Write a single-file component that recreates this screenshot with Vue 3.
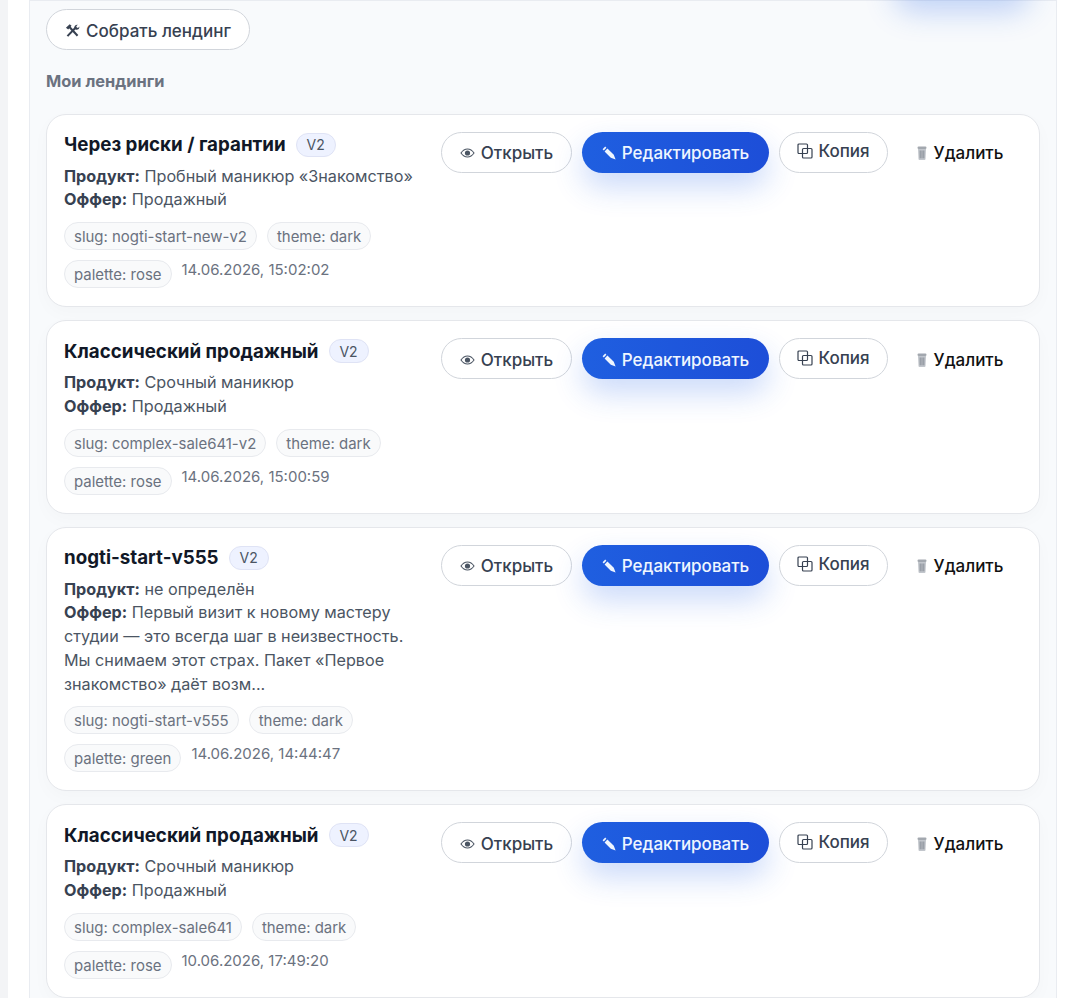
<script setup>
const cards = [
  { title: 'Через риски / гарантии', product: 'Пробный маникюр «Знакомство»', offer: 'Продажный', slug: 'nogti-start-new-v2', palette: 'rose', date: '14.06.2026, 15:02:02' },
  { title: 'Классический продажный', product: 'Срочный маникюр', offer: 'Продажный', slug: 'complex-sale641-v2', palette: 'rose', date: '14.06.2026, 15:00:59' },
  { title: 'nogti-start-v555', product: 'не определён', offer: 'Первый визит к новому мастеру студии — это всегда шаг в неизвестность. Мы снимаем этот страх. Пакет «Первое знакомство» даёт возм...', slug: 'nogti-start-v555', palette: 'green', date: '14.06.2026, 14:44:47' },
  { title: 'Классический продажный', product: 'Срочный маникюр', offer: 'Продажный', slug: 'complex-sale641', palette: 'rose', date: '10.06.2026, 17:49:20' }
]
</script>

<template>
  <div class="page">
    <main class="panel">
      <div class="glow"></div>
      <button class="btn build">
        <svg class="ic" width="15" height="15" viewBox="0 0 16 16" fill="none" stroke="#374151">
          <path d="M2.6 14 11.5 4.8" stroke-width="2.2" />
          <path d="M4.5 4 13.4 13.6" stroke-width="2.2" />
          <path d="M1 5 5 1.4l2 1.6-3.6 4Z" fill="#374151" stroke="none" />
          <path d="M10 5.4c-.4-2.2 1.4-4 3.6-3.6L12 3.5l.6 1.3 1.3.5 1.4-1.6c.4 2.4-1.6 4-3.8 3.5Z" fill="#374151" stroke="none" />
        </svg>
        Собрать лендинг
      </button>
      <h2 class="heading">Мои лендинги</h2>
      <section class="list">
        <article v-for="card in cards" :key="card.slug" class="card">
          <div class="info">
            <div class="title-row">
              <span class="title">{{ card.title }}</span>
              <span class="badge">V2</span>
            </div>
            <div class="meta">
              <div><b>Продукт:</b> {{ card.product }}</div>
              <div><b>Оффер:</b> {{ card.offer }}</div>
            </div>
            <div class="tags">
              <span class="tag">slug: {{ card.slug }}</span>
              <span class="tag">theme: dark</span>
              <span class="tag">palette: {{ card.palette }}</span>
              <span class="date">{{ card.date }}</span>
            </div>
          </div>
          <div class="actions">
            <button class="btn open">
              <svg class="ic" width="15" height="10" viewBox="0 0 15 10" fill="none" stroke="#4b5563">
                <path d="M1 5C3 2 5 1 7.5 1S12 2 14 5C12 8 10 9 7.5 9S3 8 1 5Z" stroke-width="1.1" />
                <circle cx="7.5" cy="5" r="2.6" fill="#4b5563" stroke="none" />
              </svg>
              Открыть
            </button>
            <button class="btn primary">
              <svg class="ic" width="14" height="14" viewBox="0 0 14 14" fill="#eff6ff">
                <path d="M.6 3.2 3.2.6l1.2 1.2-2.6 2.6Z" />
                <path d="M2.6 5.4 5.4 2.6l6.4 6.2 1.8 4.8-4.8-1.8Z" />
              </svg>
              Редактировать
            </button>
            <button class="btn copy">
              <svg class="ic" width="16" height="16" viewBox="0 0 16 16" fill="none" stroke="#374151" stroke-width="1.2">
                <rect x="1" y="1" width="9.5" height="9.5" rx="1" />
                <rect x="5.5" y="5.5" width="9.5" height="9.5" rx="1" />
              </svg>
              <span>Копия</span>
            </button>
            <button class="btn del">
              <svg class="ic" width="10" height="14" viewBox="0 0 10 14">
                <rect x=".5" y=".5" width="9" height="2.4" rx="1.2" fill="#a3a8af" />
                <path d="M1 2.9h8l-.5 10.1a1 1 0 0 1-1 1h-5a1 1 0 0 1-1-1Z" fill="#c2c6cc" />
                <path d="M3.2 4.5v7.8M5 4.5v7.8M6.8 4.5v7.8" stroke="#7b828c" stroke-width=".8" />
              </svg>
              Удалить
            </button>
          </div>
        </article>
      </section>
    </main>
  </div>
</template>

<style>
body { margin: 0; background: #fff; }
</style>

<style scoped>
.page {
  height: 998px;
  overflow: hidden;
  box-sizing: border-box;
  padding: 0 12px 0 29px;
  background: linear-gradient(90deg, #f3f4f6 0, #f3f4f6 8px, #fff 8px);
  font-family: Inter, "Liberation Sans", sans-serif;
  color: #111827;
}
.panel {
  position: relative;
  box-sizing: border-box;
  min-height: 998px;
  padding: 8px 16px 0;
  background: #f8fafc;
  border: 1px solid #e9ecf1;
  border-width: 1px 1px 0;
}
.glow {
  position: absolute;
  top: -44px;
  right: 26px;
  width: 136px;
  height: 40px;
  border-radius: 20px;
  box-shadow: 0 14px 30px rgba(37, 99, 235, 0.28);
}
.btn {
  display: inline-flex;
  align-items: center;
  justify-content: center;
  box-sizing: border-box;
  height: 41px;
  padding: 2px 0 0;
  border: 1px solid #d1d5db;
  border-radius: 21px;
  background: #fff;
  font: 500 17px Inter, "Liberation Sans", sans-serif;
  color: #374151;
  white-space: nowrap;
}
.ic { flex: none; }
.build { gap: 6px; width: 204px; }
.heading {
  margin: 21px 0 0;
  font-size: 16.4px;
  line-height: 20px;
  font-weight: 700;
  color: #6b7280;
}
.list {
  display: flex;
  flex-direction: column;
  gap: 13px;
  margin-top: 22.5px;
}
.card {
  display: flex;
  gap: 18px;
  box-sizing: border-box;
  padding: 17px 17px 18px;
  background: #fff;
  border: 1px solid #e5e7eb;
  border-radius: 20px;
  box-shadow: 0 6px 18px rgba(15, 23, 42, 0.025);
}
.info { width: 359px; flex: none; }
.title-row { display: flex; align-items: center; gap: 10px; height: 26px; }
.title { font-size: 18.75px; font-weight: 700; color: #111827; white-space: nowrap; }
.badge {
  display: inline-flex;
  align-items: center;
  justify-content: center;
  box-sizing: border-box;
  width: 40px;
  height: 24px;
  border: 1px solid #dfe3f5;
  border-radius: 12px;
  background: #eef2ff;
  font-size: 14px;
  font-weight: 400;
  color: #4b5563;
}
.meta {
  margin-top: 7px;
  font-size: 16.2px;
  line-height: 23.75px;
  color: #4b5563;
}
.meta b { font-weight: 700; color: #374151; }
.tags {
  display: flex;
  flex-wrap: wrap;
  align-items: flex-start;
  gap: 10px;
  margin-top: 10px;
}
.tag {
  box-sizing: border-box;
  height: 28px;
  padding: 0 9px;
  line-height: 28px;
  border: 1px solid #e8eaee;
  border-radius: 14px;
  background: #f9fafb;
  font-size: 14.96px;
  color: #6b7280;
  white-space: nowrap;
}
.date { font-size: 15px; line-height: 20px; color: #6b7280; }
.actions { display: flex; gap: 10px; }
.open { gap: 6px; width: 131px; }
.primary {
  gap: 6px;
  width: 187px;
  border: 0;
  background: linear-gradient(90deg, #1f5fe0, #1d4ed8);
  color: #eff6ff;
  box-shadow: 0 14px 30px rgba(37, 99, 235, 0.24);
}
.copy { gap: 5px; width: 109px; }
.copy .ic, .copy span { position: relative; top: -2px; }
.del { gap: 7px; width: 124px; border-color: transparent; background: transparent; color: #111; }
</style>
